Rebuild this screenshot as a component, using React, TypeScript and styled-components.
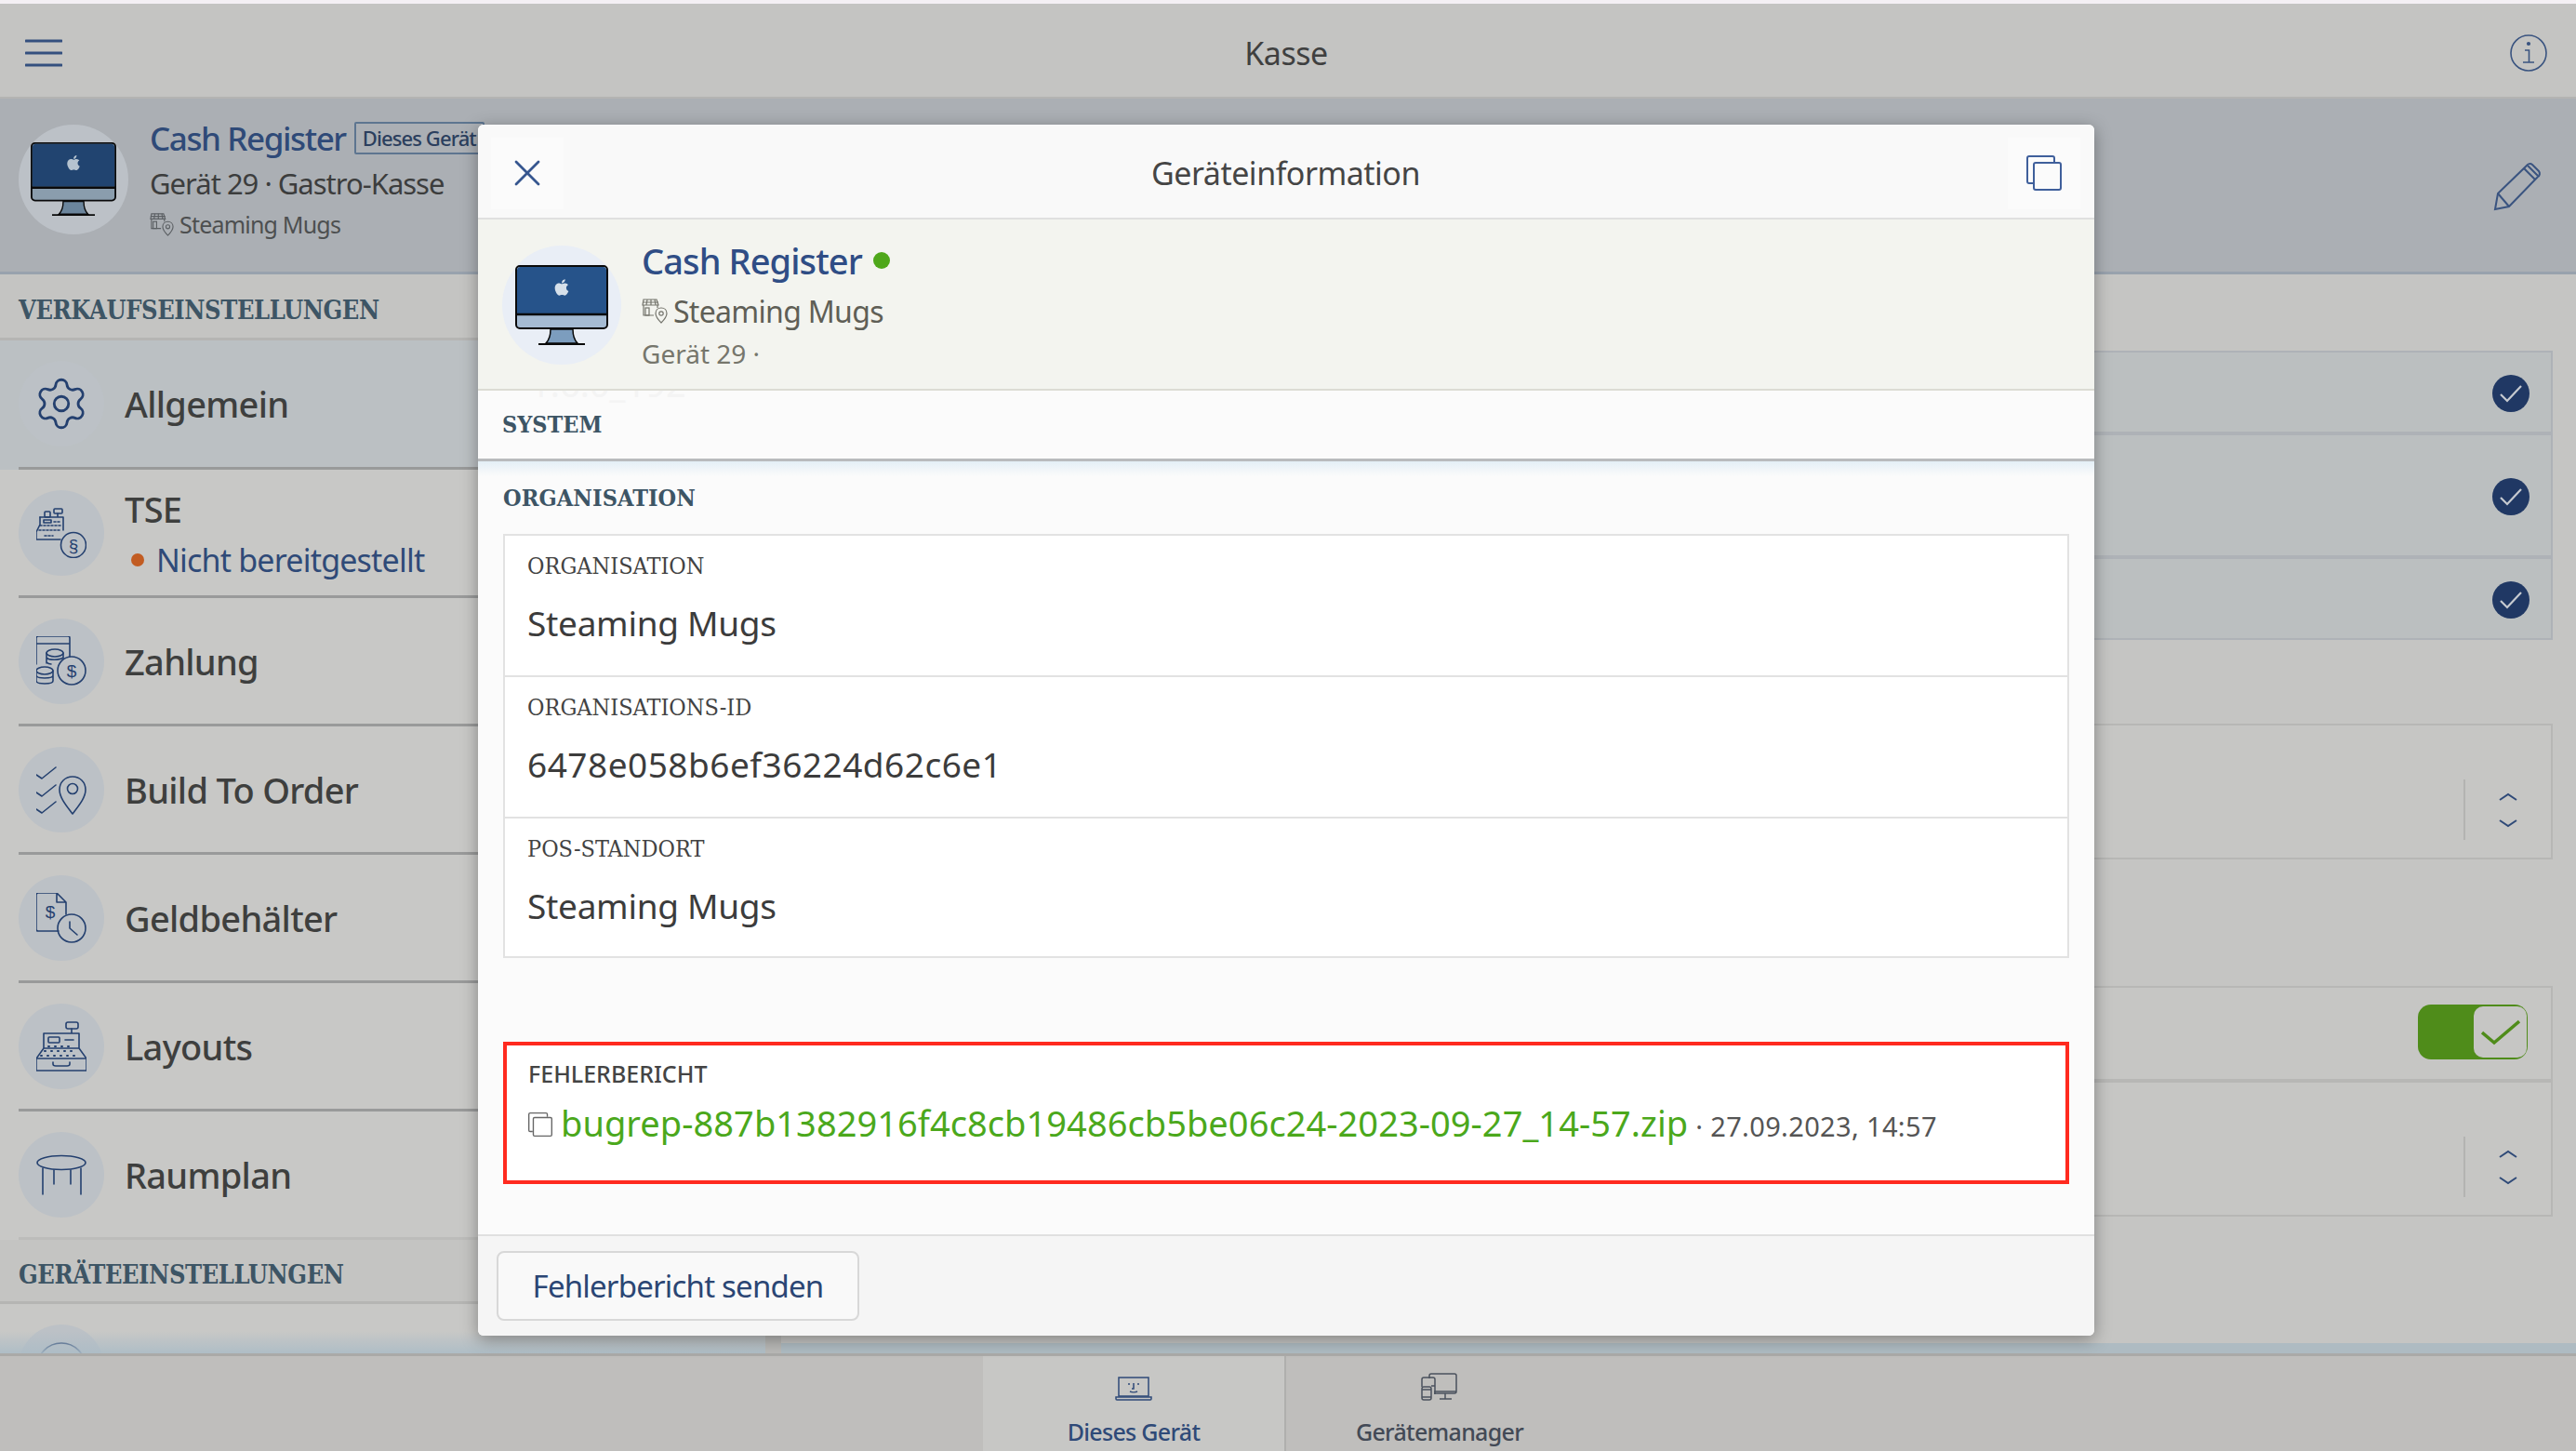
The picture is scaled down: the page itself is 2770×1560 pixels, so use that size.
import { createGlobalStyle } from "styled-components";
import styled from "styled-components";
import { FaApple } from "react-icons/fa";
import { Settings, X } from "lucide-react";

const SANS = `"Noto Sans", "Open Sans", sans-serif`;
const SLAB = `"DejaVu Serif Condensed", "DejaVu Serif", serif`;

const GlobalStyle = createGlobalStyle`
  html, body {
    margin: 0;
    width: 2770px;
    height: 1560px;
    overflow: hidden;
    font-family: ${SANS};
  }
`;

const Page = styled.div`
  position: relative;
  width: 2770px;
  height: 1560px;
  display: flex;
  flex-direction: column;
  overflow: hidden;
  background: #c5c5c3;
`;

const TopStripe = styled.div`
  height: 4px;
  background: #f4f0f4;
`;

const TopBar = styled.header`
  height: 102px;
  box-sizing: border-box;
  display: flex;
  align-items: center;
  justify-content: space-between;
  padding: 6px 31px 0 27px;
  background: #c4c4c2;
  border-bottom: 2px solid #b4b4b2;
`;

const TopTitle = styled.div`
  font-size: 34px;
  letter-spacing: -0.5px;
  color: #3f4040;
`;

const DeviceBar = styled.section`
  height: 189px;
  box-sizing: border-box;
  display: flex;
  align-items: flex-start;
  padding: 24px 37px 0 20px;
  background: #abafb4;
  border-bottom: 3px solid #98a2ad;
`;

const BarAvatar = styled.div`
  width: 118px;
  height: 118px;
  margin-top: 4px;
  border-radius: 50%;
  background: #bcc1c7;
  display: flex;
  align-items: center;
  justify-content: center;
  flex-shrink: 0;
`;

const BarInfo = styled.div`
  margin-left: 23px;
  display: flex;
  flex-direction: column;
`;

const BarName = styled.div`
  display: flex;
  align-items: center;
  height: 36px;
  gap: 9px;
  font-size: 35px;
  font-weight: 500;
  letter-spacing: -1.4px;
  color: #2f4a78;
`;

const Badge = styled.span`
  height: 35px;
  box-sizing: border-box;
  padding: 0 7px;
  border: 2px solid #5d7590;
  border-radius: 2px;
  font-size: 22px;
  font-weight: 500;
  line-height: 30px;
  letter-spacing: -0.9px;
  white-space: nowrap;
  color: #2b3f5e;
`;

const BarSub = styled.div`
  font-size: 31px;
  line-height: 62px;
  letter-spacing: -1px;
  color: #3c3d3d;
`;

const BarPlace = styled.div`
  display: flex;
  align-items: center;
  gap: 6px;
  height: 26px;
  line-height: 26px;
  font-size: 25px;
  letter-spacing: -0.8px;
  color: #4d4f50;
`;

const EditIcon = styled.svg`
  width: 52px;
  height: 53px;
  margin-top: 44px;
  margin-left: auto;
`;

const Content = styled.main`
  position: relative;
  flex: 1;
  min-height: 0;
  display: flex;
  gap: 17px;
  background: #b9b9b7;
`;

const Sidebar = styled.nav`
  position: relative;
  width: 823px;
  overflow: hidden;
  background: #c8c8c6;
  &::after {
    content: "";
    position: absolute;
    left: 0;
    right: 0;
    bottom: 0;
    height: 24px;
    background: linear-gradient(rgba(172, 188, 198, 0), rgba(172, 188, 198, 0.9));
  }
`;

const SectionHead = styled.div<{ $height: number }>`
  height: ${(p) => p.$height}px;
  box-sizing: border-box;
  display: flex;
  align-items: center;
  padding: 9px 0 0 20px;
  background: #c4c4c2;
  border-bottom: 3px solid #b5b5b3;
  font-family: ${SLAB};
  font-size: 27px;
  font-weight: 700;
  letter-spacing: -0.4px;
  color: #3d5565;
`;

const Row = styled.div<{ $active?: boolean; $height?: number }>`
  height: ${(p) => p.$height ?? 138}px;
  padding-left: 20px;
  background: ${(p) => (p.$active ? "#bbc0c3" : "transparent")};
`;

const RowInner = styled.div<{ $plain?: boolean }>`
  height: 100%;
  box-sizing: border-box;
  display: flex;
  align-items: center;
  gap: 22px;
  border-bottom: 3px solid ${(p) => (p.$plain ? "#bcbcba" : "#999a9a")};
`;

const RowCircle = styled.div`
  width: 92px;
  height: 92px;
  border-radius: 50%;
  background: #bcc1c6;
  display: flex;
  align-items: center;
  justify-content: center;
  flex-shrink: 0;
`;

const RowLabel = styled.div`
  font-size: 38px;
  font-weight: 500;
  letter-spacing: -0.7px;
  color: #3e3f3e;
`;

const RowStack = styled.div`
  display: flex;
  flex-direction: column;
  gap: 6px;
`;

const RowStatus = styled.div`
  display: flex;
  align-items: center;
  gap: 13px;
  padding-left: 7px;
  font-size: 34px;
  letter-spacing: -0.8px;
  color: #2f4a78;
`;

const StatusDot = styled.span<{ $color: string; $size?: number }>`
  width: ${(p) => p.$size ?? 14}px;
  height: ${(p) => p.$size ?? 14}px;
  border-radius: 50%;
  background: ${(p) => p.$color};
  flex-shrink: 0;
`;

const RightPane = styled.div`
  position: relative;
  flex: 1;
  box-sizing: border-box;
  padding: 82px 25px 0 29px;
  overflow: hidden;
  background: #c5c5c3;
  &::after {
    content: "";
    position: absolute;
    left: 0;
    right: 0;
    bottom: 0;
    height: 11px;
    background: #aebbc2;
  }
`;

const SettingCard = styled.div<{ $height: number; $selected?: boolean; $gap?: number }>`
  height: ${(p) => p.$height}px;
  box-sizing: border-box;
  margin-top: ${(p) => p.$gap ?? 0}px;
  display: flex;
  justify-content: flex-end;
  align-items: center;
  border: 2px solid ${(p) => (p.$selected ? "#aeb2b7" : "#b7b7b5")};
  background: ${(p) => (p.$selected ? "#bbbfc0" : "#c6c6c4")};
`;

const CheckBadge = styled.div`
  width: 40px;
  height: 40px;
  margin: 2px 23px 0 0;
  border-radius: 50%;
  background: #203864;
  display: flex;
  align-items: center;
  justify-content: center;
`;

const StepperCell = styled.div`
  align-self: flex-end;
  width: 94px;
  height: 65px;
  margin-bottom: 19px;
  box-sizing: border-box;
  border-left: 2px solid #b3b3b1;
  display: flex;
  flex-direction: column;
  align-items: center;
  justify-content: center;
  gap: 20px;
`;

const Toggle = styled.div`
  width: 118px;
  height: 59px;
  margin-right: 25px;
  margin-top: -3px;
  border-radius: 14px;
  background: #4f8c1a;
  display: flex;
  justify-content: flex-end;
  align-items: center;
  padding-right: 1px;
  box-sizing: border-box;
`;

const ToggleKnob = styled.div`
  width: 57px;
  height: 55px;
  box-sizing: border-box;
  border-radius: 10px;
  background: #c6c6c4;
  display: flex;
  align-items: center;
  justify-content: center;
`;

const TabBar = styled.footer`
  height: 105px;
  box-sizing: border-box;
  display: flex;
  justify-content: center;
  background: #bfbebc;
  border-top: 3px solid #aaaaa8;
`;

const Tab = styled.div<{ $active?: boolean }>`
  width: ${(p) => (p.$active ? 326 : 330)}px;
  box-sizing: border-box;
  display: flex;
  flex-direction: column;
  align-items: center;
  padding-top: ${(p) => (p.$active ? 22 : 18)}px;
  gap: 16px;
  background: ${(p) => (p.$active ? "#c7c7c5" : "transparent")};
  border-right: ${(p) => (p.$active ? "2px solid #afafad" : "none")};
  font-size: 25px;
  font-weight: 500;
  letter-spacing: -0.7px;
  color: ${(p) => (p.$active ? "#2f4a78" : "#434a56")};
`;

const Modal = styled.div`
  position: absolute;
  left: 514px;
  top: 134px;
  width: 1738px;
  height: 1302px;
  display: flex;
  flex-direction: column;
  overflow: hidden;
  border-radius: 6px;
  background: #fbfbfb;
  box-shadow: 0 4px 18px rgba(0, 0, 0, 0.35);
`;

const ModalHead = styled.div`
  height: 102px;
  flex-shrink: 0;
  box-sizing: border-box;
  display: flex;
  align-items: center;
  justify-content: space-between;
  padding: 4px 15px 0 14px;
  background: #f9f9f9;
  border-bottom: 2px solid #e0e0e0;
`;

const HeadButton = styled.div`
  width: 78px;
  height: 77px;
  display: flex;
  align-items: center;
  justify-content: center;
  background: #fbfbfb;
  color: #36568f;
`;

const ModalTitle = styled.div`
  font-size: 34px;
  letter-spacing: -0.5px;
  color: #454545;
`;

const DeviceInfo = styled.div`
  height: 184px;
  flex-shrink: 0;
  box-sizing: border-box;
  display: flex;
  align-items: flex-start;
  padding: 28px 0 0 26px;
  background: #f3f4ef;
  border-bottom: 2px solid #dcdcd4;
`;

const InfoAvatar = styled.div`
  width: 128px;
  height: 128px;
  border-radius: 50%;
  background: #e9eef6;
  display: flex;
  align-items: center;
  justify-content: center;
  flex-shrink: 0;
`;

const InfoText = styled.div`
  margin-left: 22px;
  display: flex;
  flex-direction: column;
`;

const InfoName = styled.div`
  display: flex;
  align-items: center;
  gap: 12px;
  height: 32px;
  font-size: 38px;
  font-weight: 500;
  letter-spacing: -0.9px;
  color: #2f4d85;
`;

const InfoPlace = styled.div`
  display: flex;
  align-items: center;
  gap: 6px;
  height: 54px;
  margin-top: 11px;
  font-size: 32px;
  letter-spacing: -0.7px;
  color: #5f5f56;
`;

const InfoMeta = styled.div`
  margin-top: 2px;
  height: 34px;
  font-size: 28px;
  line-height: 34px;
  color: #76766c;
`;

const SystemRow = styled.div`
  position: relative;
  height: 76px;
  flex-shrink: 0;
  box-sizing: border-box;
  display: flex;
  align-items: center;
  padding-left: 26px;
  overflow: hidden;
  border-bottom: 3px solid #b9bbbd;
  font-family: ${SLAB};
  font-size: 25px;
  font-weight: 700;
  color: #3d5565;
`;

const GhostValue = styled.span`
  position: absolute;
  left: 56px;
  top: -34px;
  font-family: ${SANS};
  font-size: 38px;
  font-weight: 400;
  color: #f4f4f4;
`;

const ModalBody = styled.div`
  flex: 1;
  min-height: 0;
  padding: 0 27px;
  background: linear-gradient(#e4eff6, #fbfbfb 16px);
`;

const BodyHead = styled.div`
  height: 78px;
  display: flex;
  align-items: center;
  font-family: ${SLAB};
  font-size: 25px;
  font-weight: 700;
  letter-spacing: 0.1px;
  color: #3d5565;
`;

const InfoCard = styled.div`
  border: 2px solid #e2e2e2;
  background: #fff;
`;

const InfoRow = styled.div`
  height: 152px;
  box-sizing: border-box;
  padding: 15px 0 0 24px;
  border-bottom: 2px solid #e2e2e2;
  &:last-child {
    height: 148px;
    border-bottom: none;
  }
`;

const FieldLabel = styled.div`
  height: 36px;
  line-height: 36px;
  font-family: ${SLAB};
  font-size: 25px;
  color: #434343;
`;

const FieldValue = styled.div<{ $id?: boolean }>`
  margin-top: 21px;
  height: 44px;
  line-height: 44px;
  font-size: 37px;
  letter-spacing: ${(p) => (p.$id ? "0.5px" : "-0.3px")};
  color: #3c3c3c;
`;

const ReportBox = styled.div`
  height: 153px;
  margin-top: 90px;
  box-sizing: border-box;
  padding: 13px 0 0 23px;
  border: 4px solid #ff2a1f;
  background: #fff;
`;

const ReportLabel = styled.div`
  height: 34px;
  line-height: 34px;
  font-size: 25px;
  font-weight: 500;
  color: #444;
`;

const ReportLine = styled.div`
  display: flex;
  align-items: baseline;
  margin-top: 10px;
  height: 50px;
`;

const ReportLink = styled.span`
  margin-left: 9px;
  font-size: 38px;
  letter-spacing: 0.05px;
  color: #4ba81c;
`;

const ReportDate = styled.span`
  margin-left: 8px;
  font-size: 29px;
  letter-spacing: 0.35px;
  color: #555;
`;

const ModalFooter = styled.div`
  height: 109px;
  flex-shrink: 0;
  box-sizing: border-box;
  display: flex;
  align-items: center;
  padding-left: 20px;
  background: #f5f5f5;
  border-top: 2px solid #e0e0e0;
`;

const SendButton = styled.button`
  width: 390px;
  height: 75px;
  border: 2px solid #d8d8d8;
  border-radius: 8px;
  background: #f9f9f9;
  font-family: ${SANS};
  font-size: 33px;
  letter-spacing: -0.8px;
  color: #2b4674;
`;

const ICON = "#24406f";

function Monitor({ width, dim }: { width: number; dim?: boolean }) {
  return (
    <svg width={width} height={(width * 86) / 100} viewBox="0 0 100 86">
      <rect x="1" y="1" width="98" height="67" rx="4" fill={dim ? "#8a9dad" : "#a5bbd3"} stroke="#0a0a0a" strokeWidth="2" />
      <path d="M2 52V5a4 4 0 0 1 3-3h90a4 4 0 0 1 3 3v47z" fill={dim ? "#214470" : "#26538a"} />
      <path d="M1 53h98" stroke="#0a0a0a" strokeWidth="2.5" />
      <path d="M38 69c0 6-2 12-5 15h34c-3-3-5-9-5-15z" fill={dim ? "#6b859c" : "#7c9dbe"} stroke="#0a0a0a" strokeWidth="1.5" />
      <path d="M25 85h50" stroke="#0a0a0a" strokeWidth="2" />
      <FaApple x="40" y="14" size={20} color={dim ? "#b5c3cf" : "#d6e0ea"} />
    </svg>
  );
}

function StoreIcon({ size, color }: { size: number; color: string }) {
  return (
    <svg width={size} height={size} viewBox="0 0 28 28" fill="none" stroke={color} strokeWidth="1.2">
      <path d="M2 2h14l2 6H1z" />
      <path d="M6 2l-1 6M10 2v6M14 2l1 6M1 5h17" />
      <path d="M2 8v11h11M17 8v3" />
      <rect x="4" y="11" width="4" height="8" />
      <path d="M21 11c-3.500 0-6 2.500-6 6 0 3 3 7 6 10 3-3 6-7 6-10 0-3.500-2.500-6-6-6z" />
      <circle cx="21" cy="17" r="2.200" />
    </svg>
  );
}

function Glyph({ children, height }: { children: React.ReactNode; height?: number }) {
  return (
    <svg width="54" height={height ?? 54} viewBox={`0 0 54 ${height ?? 54}`} fill="none" stroke={ICON} strokeWidth="1.600" strokeLinecap="round" strokeLinejoin="round">
      {children}
    </svg>
  );
}

const GlyphText = styled.text`
  font-family: "Liberation Sans", sans-serif;
  font-size: 19px;
  fill: ${ICON};
  stroke: none;
  text-anchor: middle;
`;

const tseIcon = (
  <Glyph>
    <rect x="19" y="1" width="9" height="5" rx="1" />
    <rect x="9" y="4" width="6" height="6" rx="1" />
    <path d="M23 6v3M4 10h25v14" />
    <path d="M4 10v8L0 26v8h26" />
    <rect x="8" y="13" width="8" height="3" />
    <path d="M19 15h7M4 19h22M3 24h24M9 30h9" strokeDasharray="2 2" />
    <circle cx="40" cy="40" r="13.500" fill="#bcc1c6" />
    <GlyphText x="40" y="47">§</GlyphText>
  </Glyph>
);

const payIcon = (
  <Glyph>
    <path d="M0 30V2a2 2 0 0 1 2-2h32a2 2 0 0 1 2 2v21M0 8h36" />
    <ellipse cx="20" cy="18" rx="9" ry="4" />
    <path d="M11 18v11M29 18v6M11 23c2 3 14 3 18 0M11 28c1 1 3 2 5 2" />
    <ellipse cx="9" cy="37" rx="9" ry="4" />
    <path d="M0 37v11c0 4 18 4 18 0V37M0 42c0 4 18 4 18 0" />
    <circle cx="38" cy="37" r="15" fill="#bcc1c6" />
    <GlyphText x="38" y="44">$</GlyphText>
  </Glyph>
);

const buildIcon = (
  <Glyph>
    <path d="M0 11l6 4L21 3M0 30l6 4 15-12M0 48l6 4 15-12" />
    <path d="M39 13c-8 0-14 6-14 14 0 9 8 18 14 26 6-8 14-17 14-26 0-8-6-14-14-14z" />
    <circle cx="39" cy="26" r="5.500" />
  </Glyph>
);

const cashIcon = (
  <Glyph>
    <path d="M24 41H2a2 2 0 0 1-2-2V2a2 2 0 0 1 2-2h20l10 10v13M22 0v10h10" />
    <GlyphText x="15" y="27">$</GlyphText>
    <circle cx="38" cy="38" r="15" />
    <path d="M36 31v7l8 7" />
  </Glyph>
);

const layoutIcon = (
  <Glyph>
    <rect x="32" y="1" width="13" height="7" rx="2" />
    <path d="M38 8v5M8 13h38v16M8 13v16L0 40v13h54V40l-8-11H8" />
    <rect x="13" y="17" width="12" height="6" rx="1" />
    <path d="M31 20h9" />
    <path d="M13 27h26M9 32h34M5 37h42" strokeDasharray="1 6" strokeWidth="2" />
    <path d="M0 40h54M18 44v2c0 2 2 2 3 2h12c1 0 3 0 3-2v-2" />
  </Glyph>
);

const tableIcon = (
  <Glyph height={44}>
    <ellipse cx="27" cy="9" rx="26" ry="7.500" />
    <path d="M7 15v28M19 17v15M37 17v15M48 15v28" />
  </Glyph>
);

const rows = [
  { label: "Zahlung", icon: payIcon },
  { label: "Build To Order", icon: buildIcon },
  { label: "Geldbehälter", icon: cashIcon },
  { label: "Layouts", icon: layoutIcon },
];

function Chevrons() {
  return (
    <StepperCell>
      <svg width="20" height="9" viewBox="0 0 20 9" fill="none" stroke="#2f4a78" strokeWidth="2">
        <path d="M1 8l9-6 9 6" />
      </svg>
      <svg width="20" height="9" viewBox="0 0 20 9" fill="none" stroke="#2f4a78" strokeWidth="2">
        <path d="M1 1l9 6 9-6" />
      </svg>
    </StepperCell>
  );
}

function Tick() {
  return (
    <CheckBadge>
      <svg width="24" height="20" viewBox="0 0 24 20" fill="none" stroke="#c6cad0" strokeWidth="2.200">
        <path d="M1 11l7 7L23 2" />
      </svg>
    </CheckBadge>
  );
}

function CopyIcon({ size, color }: { size: number; color: string }) {
  return (
    <svg width={size} height={size} viewBox="0 0 38 38" fill="none" stroke={color} strokeWidth="2">
      <path d="M7 30H3a2 2 0 0 1-2-2V3a2 2 0 0 1 2-2h25a2 2 0 0 1 2 2v4" />
      <rect x="8" y="8" width="29" height="29" rx="2" />
    </svg>
  );
}

export default function App() {
  return (
    <Page>
      <GlobalStyle />
      <TopStripe />
      <TopBar>
        <svg width="40" height="30" viewBox="0 0 40 30" fill="none" stroke="#34507f" strokeWidth="3" strokeLinecap="round">
          <path d="M1 2h38M1 15h38M1 28h38" />
        </svg>
        <TopTitle>Kasse</TopTitle>
        <svg width="40" height="40" viewBox="0 0 40 40" fill="none" stroke="#3a5480" strokeWidth="1.600">
          <circle cx="20" cy="20" r="19" />
          <circle cx="20" cy="10" r="1.300" fill="#3a5480" />
          <path d="M16 17h4.500v13M14 30h12" />
        </svg>
      </TopBar>
      <DeviceBar>
        <BarAvatar>
          <Monitor width={92} dim />
        </BarAvatar>
        <BarInfo>
          <BarName>
            Cash Register
            <Badge>Dieses Gerät</Badge>
          </BarName>
          <BarSub>Gerät 29 · Gastro-Kasse</BarSub>
          <BarPlace>
            <StoreIcon size={26} color="#5c6064" />
            Steaming Mugs
          </BarPlace>
        </BarInfo>
        <EditIcon viewBox="0 0 52 53" fill="none" stroke="#3a5480" strokeWidth="2">
          <path d="M2 51l3-17L36 4a4 4 0 0 1 6-1l7 7a4 4 0 0 1-1 6L17 48z" />
          <path d="M5 34l12 14M33 7l12 12M37 4l11 11" />
        </EditIcon>
      </DeviceBar>
      <Content>
        <Sidebar>
          <SectionHead $height={71}>VERKAUFSEINSTELLUNGEN</SectionHead>
          <Row $active $height={139}>
            <RowInner>
              <RowCircle>
                <Settings size={62} strokeWidth={1.1} color={ICON} />
              </RowCircle>
              <RowLabel>Allgemein</RowLabel>
            </RowInner>
          </Row>
          <Row>
            <RowInner>
              <RowCircle>{tseIcon}</RowCircle>
              <RowStack>
                <RowLabel>TSE</RowLabel>
                <RowStatus>
                  <StatusDot $color="#c25c22" />
                  Nicht bereitgestellt
                </RowStatus>
              </RowStack>
            </RowInner>
          </Row>
          {rows.map((r) => (
            <Row key={r.label}>
              <RowInner>
                <RowCircle>{r.icon}</RowCircle>
                <RowLabel>{r.label}</RowLabel>
              </RowInner>
            </Row>
          ))}
          <Row>
            <RowInner $plain>
              <RowCircle>{tableIcon}</RowCircle>
              <RowLabel>Raumplan</RowLabel>
            </RowInner>
          </Row>
          <SectionHead $height={69}>GERÄTEEINSTELLUNGEN</SectionHead>
          <Row>
            <RowInner>
              <RowCircle>
                <Glyph>
                  <circle cx="27" cy="27" r="26" />
                </Glyph>
              </RowCircle>
            </RowInner>
          </Row>
        </Sidebar>
        <RightPane>
          <SettingCard $height={89} $selected>
            <Tick />
          </SettingCard>
          <SettingCard $height={133} $selected>
            <Tick />
          </SettingCard>
          <SettingCard $height={89} $selected>
            <Tick />
          </SettingCard>
          <SettingCard $height={146} $gap={90}>
            <Chevrons />
          </SettingCard>
          <SettingCard $height={102} $gap={136}>
            <Toggle>
              <ToggleKnob>
                <svg width="42" height="30" viewBox="0 0 42 30" fill="none" stroke="#4f8c1a" strokeWidth="3.500">
                  <path d="M1 15l13 11L41 3" />
                </svg>
              </ToggleKnob>
            </Toggle>
          </SettingCard>
          <SettingCard $height={146}>
            <Chevrons />
          </SettingCard>
          <SettingCard $height={60} $gap={136} />
        </RightPane>
      </Content>
      <TabBar>
        <Tab $active>
          <svg width="40" height="26" viewBox="0 0 40 26" fill="none" stroke="#2f4a78" strokeWidth="1.500">
            <rect x="4" y="1" width="32" height="20" />
            <path d="M1 22h38v2a1 1 0 0 1-1 1H2a1 1 0 0 1-1-1z" />
            <path d="M15 7v2M25 7v2M20 7v6h-2M16 16c2 1 6 1 8 0" />
          </svg>
          Dieses Gerät
        </Tab>
        <Tab>
          <svg width="40" height="30" viewBox="0 0 40 30" fill="none" stroke="#4b525d" strokeWidth="1.500">
            <path d="M9 6V3a2 2 0 0 1 2-2h25a2 2 0 0 1 2 2v17a2 2 0 0 1-2 2H14" />
            <path d="M14 20h24M20 28h13M26 22v6" />
            <path d="M1 15V7a2 2 0 0 1 2-2h10a2 2 0 0 1 2 2v16" />
            <rect x="1" y="15" width="10" height="14" rx="2" />
            <path d="M1 18h10M1 26h10M15 14h-4" />
          </svg>
          Gerätemanager
        </Tab>
      </TabBar>
      <Modal>
        <ModalHead>
          <HeadButton>
            <X size={48} strokeWidth={1.4} />
          </HeadButton>
          <ModalTitle>Geräteinformation</ModalTitle>
          <HeadButton>
            <CopyIcon size={38} color="#3f5f9b" />
          </HeadButton>
        </ModalHead>
        <DeviceInfo>
          <InfoAvatar>
            <Monitor width={100} />
          </InfoAvatar>
          <InfoText>
            <InfoName>
              Cash Register
              <StatusDot $color="#4ea71a" $size={18} />
            </InfoName>
            <InfoPlace>
              <StoreIcon size={28} color="#74746c" />
              Steaming Mugs
            </InfoPlace>
            <InfoMeta>Gerät 29 ·</InfoMeta>
          </InfoText>
        </DeviceInfo>
        <SystemRow>
          <GhostValue>1.6.0_192</GhostValue>
          SYSTEM
        </SystemRow>
        <ModalBody>
          <BodyHead>ORGANISATION</BodyHead>
          <InfoCard>
            <InfoRow>
              <FieldLabel>ORGANISATION</FieldLabel>
              <FieldValue>Steaming Mugs</FieldValue>
            </InfoRow>
            <InfoRow>
              <FieldLabel>ORGANISATIONS-ID</FieldLabel>
              <FieldValue $id>6478e058b6ef36224d62c6e1</FieldValue>
            </InfoRow>
            <InfoRow>
              <FieldLabel>POS-STANDORT</FieldLabel>
              <FieldValue>Steaming Mugs</FieldValue>
            </InfoRow>
          </InfoCard>
          <ReportBox>
            <ReportLabel>FEHLERBERICHT</ReportLabel>
            <ReportLine>
              <CopyIcon size={26} color="#666" />
              <ReportLink>bugrep-887b1382916f4c8cb19486cb5be06c24-2023-09-27_14-57.zip</ReportLink>
              <ReportDate>· 27.09.2023, 14:57</ReportDate>
            </ReportLine>
          </ReportBox>
        </ModalBody>
        <ModalFooter>
          <SendButton>Fehlerbericht senden</SendButton>
        </ModalFooter>
      </Modal>
    </Page>
  );
}
